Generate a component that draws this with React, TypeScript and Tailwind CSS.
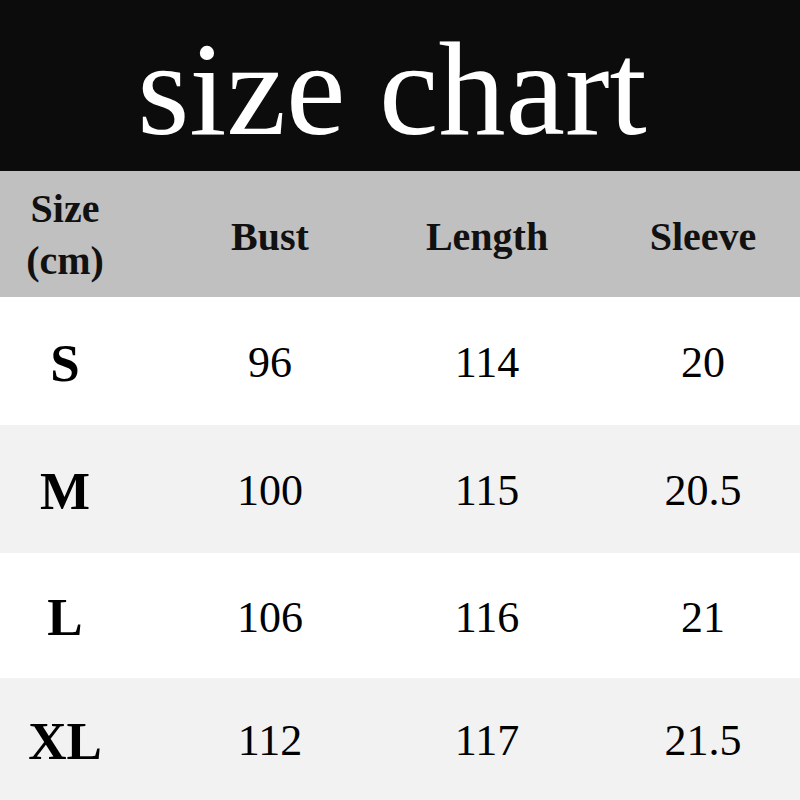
import React from 'react';

const rows = [
  { size: 'S', bust: '96', length: '114', sleeve: '20', bg: 'bg-white', h: 'h-[128px]' },
  { size: 'M', bust: '100', length: '115', sleeve: '20.5', bg: 'bg-[#f2f2f2]', h: 'h-[128px]' },
  { size: 'L', bust: '106', length: '116', sleeve: '21', bg: 'bg-white', h: 'h-[125px]' },
  { size: 'XL', bust: '112', length: '117', sleeve: '21.5', bg: 'bg-[#f2f2f2]', h: 'h-[122px]' },
];

const App = () => {
  return (
    <div className="w-[800px] h-[800px] overflow-hidden bg-white text-black font-['Liberation_Serif','Times_New_Roman',serif]">
      <div className="h-[171px] bg-[#0c0c0c] flex items-center justify-center">
        <h1 className="text-[134px] leading-none text-white pr-[16px] pt-[6px]">size chart</h1>
      </div>

      {/* header row */}
      <div className="h-[126px] bg-[#c0c0c0] flex items-center font-bold text-[40px] text-[#111] pt-[5px]">
        <div className="w-[130px] flex flex-col items-center leading-[52px] pb-[4px]">
          <span>Size</span>
          <span>(cm)</span>
        </div>
        <div className="w-[280px] text-center">Bust</div>
        <div className="w-[154px] text-center">Length</div>
        <div className="w-[236px] pl-[42px] text-center">Sleeve</div>
      </div>

      {rows.map((r) => (
        <div key={r.size} className={`${r.h} ${r.bg} flex items-center text-[44px] leading-none pt-[4px]`}>
          <div className="w-[130px] text-center font-bold text-[53px]">{r.size}</div>
          <div className="w-[280px] text-center">{r.bust}</div>
          <div className="w-[154px] text-center">{r.length}</div>
          <div className="w-[236px] pl-[42px] text-center">{r.sleeve}</div>
        </div>
      ))}
    </div>
  );
};

export default App;
